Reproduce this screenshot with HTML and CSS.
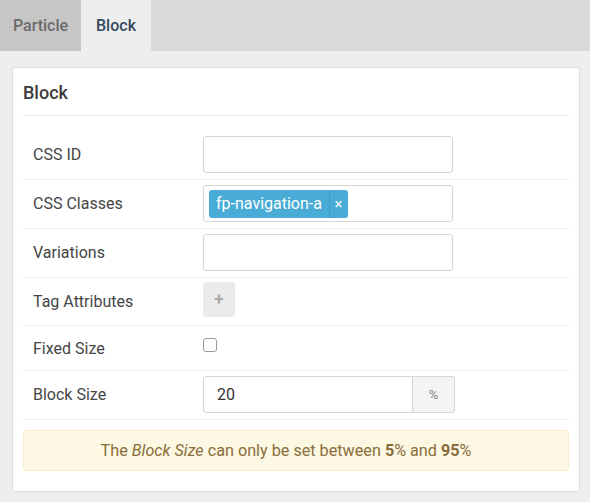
FILE: index.html
```html
<!DOCTYPE html>
<html>
<head>
<meta charset="utf-8">
<link rel="stylesheet" href="styles.css">
</head>
<body>
<div class="tabs">
  <div class="tab tab-particle">Particle</div>
  <div class="tab tab-active">Block</div>
</div>
<div class="main">
  <div class="card">
    <h2 class="card-title">Block</h2>
    <div class="form">
      <div class="row">
        <div class="label">CSS ID</div>
        <div class="field"><div class="input"></div></div>
      </div>
      <div class="row">
        <div class="label">CSS Classes</div>
        <div class="field">
          <div class="input input-tags">
            <span class="chip"><span class="chip-text">fp-navigation-a</span><span class="chip-x">×</span></span>
          </div>
        </div>
      </div>
      <div class="row">
        <div class="label">Variations</div>
        <div class="field"><div class="input"></div></div>
      </div>
      <div class="row row-tag">
        <div class="label">Tag Attributes</div>
        <div class="field"><div class="add-btn">+</div></div>
      </div>
      <div class="row row-check">
        <div class="label">Fixed Size</div>
        <div class="field"><span class="checkbox"></span></div>
      </div>
      <div class="row">
        <div class="label">Block Size</div>
        <div class="field">
          <div class="group">
            <div class="input input-num">20</div>
            <div class="addon">%</div>
          </div>
        </div>
      </div>
    </div>
    <div class="alert">The <em>Block Size</em> can only be set between <strong>5</strong>% and <strong>95</strong>%</div>
  </div>
</div>
</body>
</html>
```
FILE: styles.css
```css
* { box-sizing: border-box; }
html, body { margin: 0; padding: 0; }
body {
  background: #eeeeee;
  font-family: Roboto, "Liberation Sans", sans-serif;
  font-size: 16px;
  color: #3d3d3d;
}
.tabs {
  display: flex;
  height: 51px;
  background: #d9d9d9;
}
.tab {
  height: 51px;
  line-height: 51px;
  text-align: center;
  font-size: 16px;
  font-weight: 500;
}
.tab-particle {
  width: 81px;
  background: #c6c6c6;
  color: #6a6a6a;
}
.tab-active {
  width: 70px;
  background: #eeeeee;
  color: #34495e;
}
.main {
  padding: 16px 10px 0 12px;
}
.card {
  background: #fff;
  border: 1px solid #dcdcdc;
  border-radius: 3px;
  padding: 0 10px 20px 10px;
  height: 425px;
}
.card-title {
  margin: 0;
  padding: 14px 0 12px;
  font-size: 18px;
  font-weight: 500;
  line-height: 21px;
  color: #3a3a3a;
  border-bottom: 1px solid #ebebeb;
}
.form {
  margin-top: 15px;
}
.row {
  display: flex;
  align-items: center;
  padding: 5px 0 6px;
  border-bottom: 1px solid #eeeeee;
}
.label {
  width: 180px;
  padding-left: 10px;
  color: #454545;
  font-size: 16px;
}
.field {
  flex: 1;
  display: flex;
  align-items: center;
}
.input {
  width: 250px;
  height: 37px;
  border: 1px solid #d5d5d5;
  border-radius: 3px;
  background: #fff;
}
.input-tags {
  display: flex;
  align-items: flex-start;
  padding: 4px 5px;
}
.chip {
  display: inline-flex;
  align-items: stretch;
  height: 28px;
  background: #48acd6;
  color: #fff;
  border-radius: 3px;
  font-size: 16px;
  line-height: 28px;
}
.chip-text {
  padding: 0 7px 0 7px;
}
.chip-x {
  width: 19px;
  text-align: center;
  border-left: 1px solid #3d9bc2;
  font-size: 14px;
  padding-right: 1px;
}
.row-tag .field { height: 36px; align-items: flex-start; }
.add-btn {
  width: 32px;
  height: 35px;
  margin-top: -1px;
  background: #ebebeb;
  border-radius: 3px;
  color: #aaa;
  font-weight: 700;
  font-size: 17px;
  line-height: 35px;
  text-align: center;
}
.row-check .field { height: 33px; align-items: flex-start; }
.row-check .label { margin-top: 1px; }
.checkbox {
  display: block;
  width: 14px;
  height: 14px;
  margin-top: 7px;
  border: 1px solid #999;
  border-radius: 3px;
  background: #fff;
}
.group {
  display: flex;
}
.input-num {
  width: 210px;
  border-radius: 3px 0 0 3px;
  padding-left: 13px;
  line-height: 35px;
  font-size: 16px;
  color: #333;
}
.addon {
  width: 42px;
  height: 37px;
  background: #f4f4f4;
  border: 1px solid #d5d5d5;
  border-left: none;
  border-radius: 0 3px 3px 0;
  color: #888;
  font-size: 13px;
  line-height: 35px;
  text-align: center;
}
.alert {
  margin-top: 10px;
  padding: 10px 30px 10px 10px;
  background: #fcf8e3;
  border: 1px solid #faebcc;
  border-radius: 3px;
  color: #8a6d3b;
  text-align: center;
  font-size: 16.2px;
  line-height: 19px;
}
.alert strong { font-weight: 700; }
```
